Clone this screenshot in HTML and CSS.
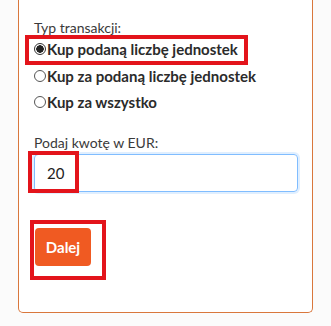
FILE: index.html
```html
<!DOCTYPE html>
<html lang="pl">
<head>
<meta charset="utf-8">
<link rel="stylesheet" href="styles.css">
</head>
<body>
<div class="card">
  <div class="label">Typ transakcji:</div>
  <div class="options">
    <label class="opt"><span class="radio checked"></span>Kup podaną liczbę jednostek</label>
    <label class="opt"><span class="radio"></span>Kup za podaną liczbę jednostek</label>
    <label class="opt"><span class="radio"></span>Kup za wszystko</label>
  </div>
  <div class="label label-amount">Podaj kwotę w EUR:</div>
  <div class="input">20</div>
  <button class="btn">Dalej</button>
  <span class="hl hl-1"></span>
  <span class="hl hl-2"></span>
  <span class="hl hl-3"></span>
</div>
</body>
</html>
```
FILE: styles.css
```css
html, body {
  margin: 0;
  padding: 0;
  background: #fbfbfb;
}
body {
  font-family: Lato, "Open Sans", sans-serif;
  color: #333;
}
.card {
  position: relative;
  box-sizing: border-box;
  margin-left: 18px;
  width: 295px;
  height: 313px;
  background: #fff;
  border: 1px solid #d9773c;
  border-top: 0;
  border-radius: 0 0 5px 5px;
  padding: 20px 15px 0;
}
.label {
  font-size: 14px;
  line-height: 16px;
  color: #3a3a3a;
}
.options {
  display: flex;
  flex-direction: column;
  margin-top: 0;
}
.opt {
  display: flex;
  align-items: center;
  height: 26.5px;
  font-size: 15px;
  font-weight: 700;
  color: #2b2b2b;
}
.radio {
  box-sizing: border-box;
  width: 12px;
  height: 12px;
  border-radius: 50%;
  border: 1px solid #555;
  margin-right: 1px;
  flex: none;
  background: #fff;
}
.radio.checked {
  border-color: #333;
  background: radial-gradient(circle, #222 0 3.5px, #fff 4px);
}
.label-amount {
  margin-top: 19px;
}
.input {
  box-sizing: border-box;
  margin-top: 3px;
  width: 264px;
  height: 38px;
  border: 1px solid #80bdff;
  border-radius: 4px;
  box-shadow: 0 0 0 2px rgba(0, 123, 255, 0.12);
  padding-left: 12px;
  font-size: 15px;
  line-height: 36px;
  color: #222;
}
.btn {
  display: block;
  margin: 36px 0 0 1px;
  width: 56px;
  height: 38px;
  border: 0;
  border-radius: 4px;
  background: #f05a22;
  color: #fff;
  font-family: Lato, "Open Sans", sans-serif;
  font-size: 15px;
  font-weight: 700;
  padding: 0;
}
.hl {
  position: absolute;
  box-sizing: border-box;
  border: 4px solid #e3141b;
}
.hl-1 { left: 6px; top: 35px; width: 223px; height: 30px; }
.hl-2 { left: 9px; top: 151px; width: 51px; height: 42px; }
.hl-3 { left: 11px; top: 220px; width: 76px; height: 60px; }
```
